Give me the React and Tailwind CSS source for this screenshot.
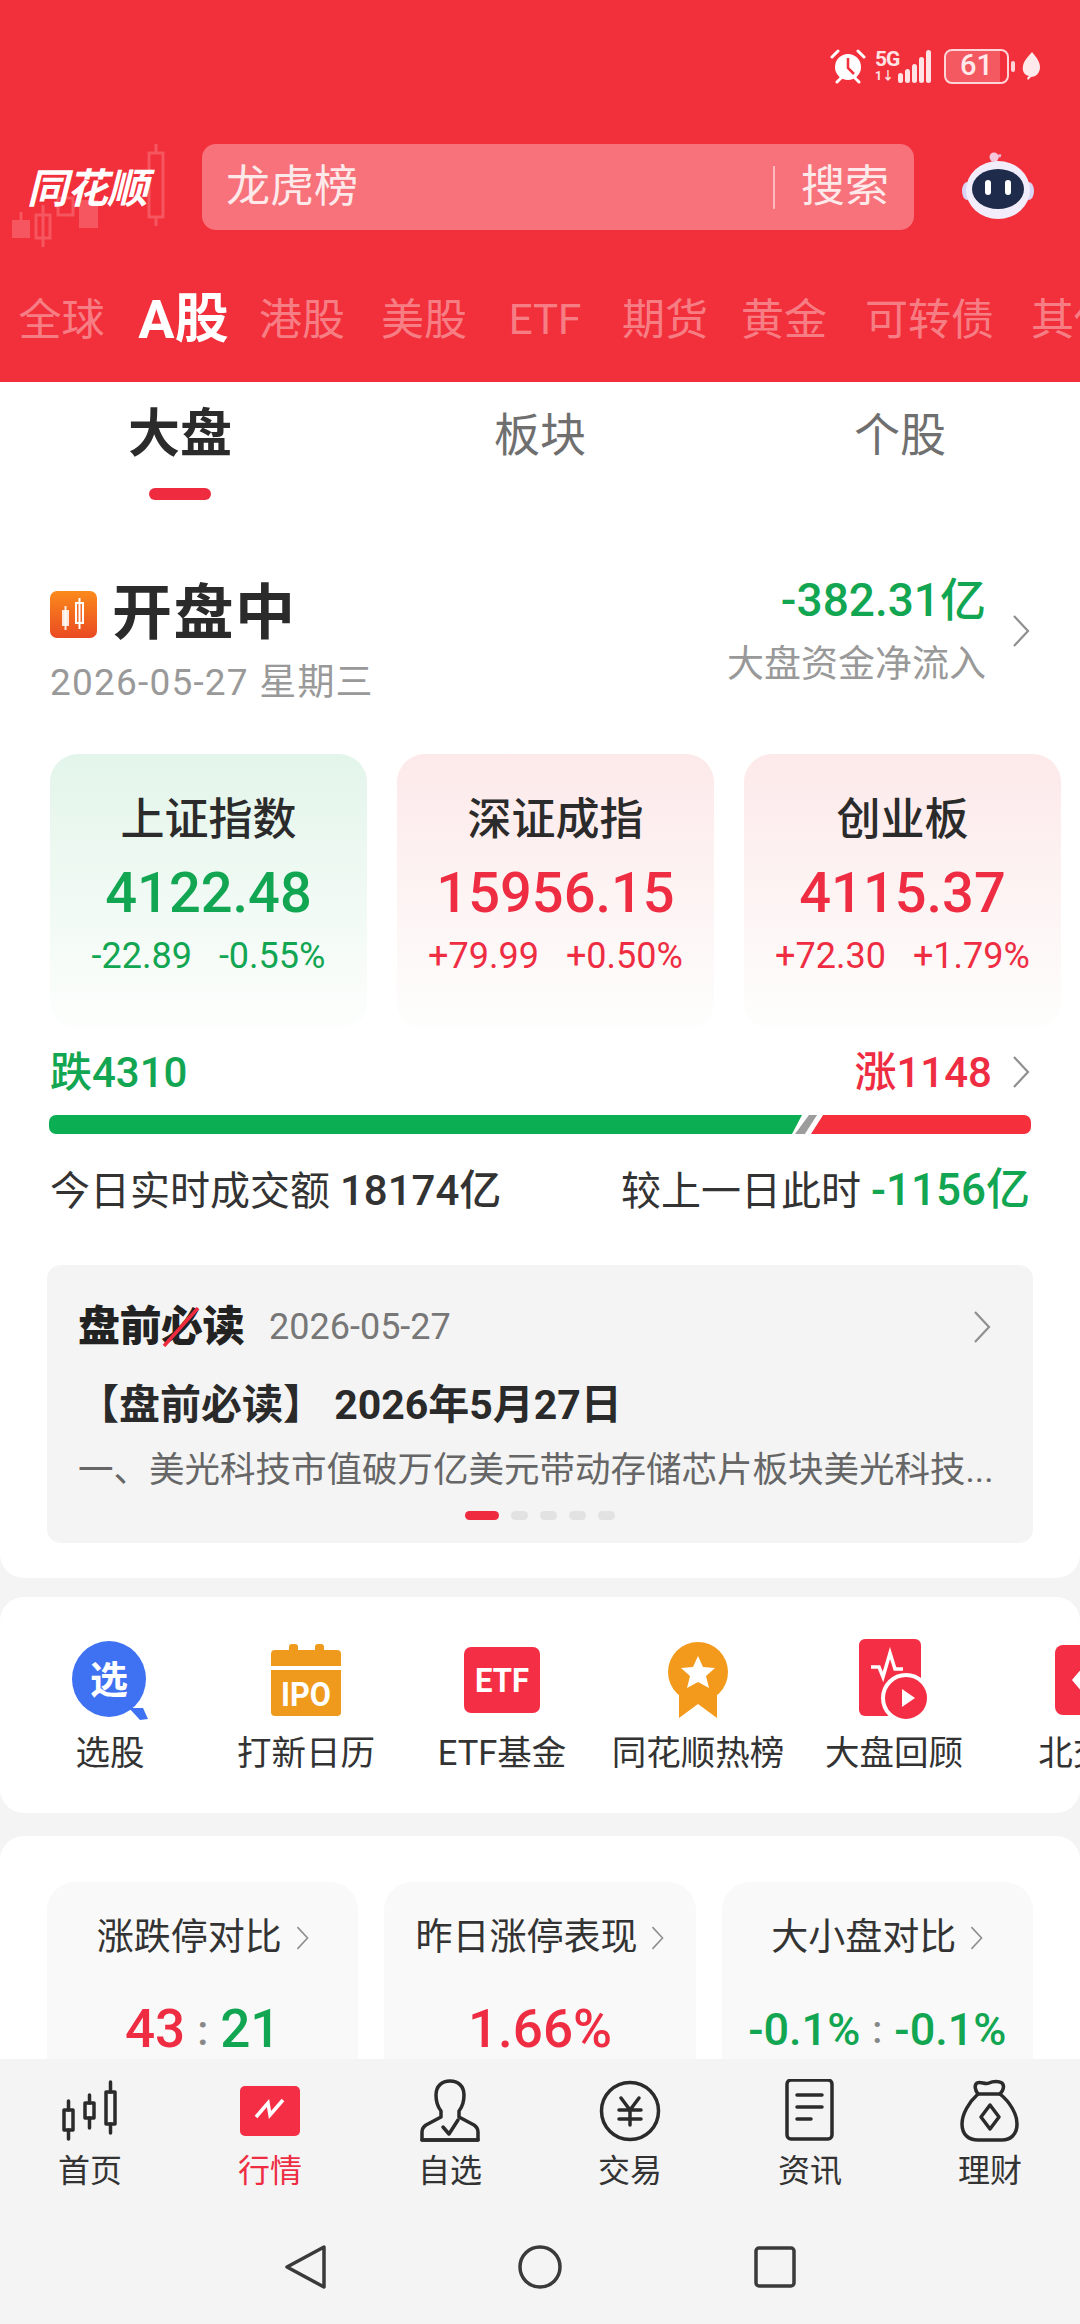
import React from "react";

const green = "text-[#12a652]";
const red = "text-[#ee2d43]";

function Chevron({ className = "", w = 18, h = 32 }) {
  return (
    <svg className={className} width={w} height={h} viewBox="0 0 18 32" fill="none" stroke="#8f8f8f" strokeWidth="2.2">
      <path d="M2 1l14 15L2 31" />
    </svg>
  );
}

function StatusIcons() {
  return (
    <div className="flex h-[40px] items-center">
      <svg width="36" height="36" viewBox="0 0 36 36" className="mr-[9px]">
        <circle cx="18" cy="19" r="13" fill="#fff" />
        <path d="M18 10v10l6 6" stroke="#f2303b" strokeWidth="2.5" fill="none" />
        <path d="M2 9l6-6M34 9l-6-6M7 34l4-4M29 34l-4-4" stroke="#fff" strokeWidth="3" strokeLinecap="round" />
      </svg>
      <div className="mr-[-3px] flex w-[26px] flex-col items-start text-[#ffe3e5]">
        <span className="text-[21px] leading-[21px] font-bold tracking-[-1px]">5G</span>
        <span className="text-[12px] leading-[13px] font-bold">1↓</span>
      </div>
      <div className="mr-[13px] flex h-[34px] items-end gap-[2px]">
        <div className="h-[10px] w-[5px] rounded-full bg-[#ffe3e5]" />
        <div className="h-[14px] w-[5px] rounded-full bg-[#ffe3e5]" />
        <div className="h-[19px] w-[5px] rounded-full bg-[#ffe3e5]" />
        <div className="h-[26px] w-[5px] rounded-full bg-[#ffe3e5]" />
        <div className="h-[33px] w-[5px] rounded-full bg-[#ffe3e5]" />
      </div>
      <div className="relative flex h-[35px] w-[65px] items-center justify-center overflow-hidden rounded-[8px] border-2 border-[#ffd5d8] text-[29px] font-medium text-[#ffe9ea]">
        <div className="absolute inset-y-0 left-0 w-[54px] bg-white/20" />
        <span className="relative">61</span>
      </div>
      <div className="mx-[2px] h-[11px] w-[4px] rounded-full bg-[#ffd5d8]" />
      <svg width="20" height="28" viewBox="0 0 20 28" className="ml-[4px]">
        <path d="M11 0c5 6 8 10 8 15 0 6-4 10-9 10l-3 3-1-2 2-2C3 23 1 19 2 14 3 8 8 4 11 0z" fill="#ffe9ea" />
      </svg>
    </div>
  );
}

function Logo() {
  return (
    <div className="relative h-[86px] w-[202px] shrink-0">
      <svg className="absolute top-0 left-0" width="202" height="110" viewBox="0 0 202 110" fill="none">
        <g fill="#f8676f" opacity="0.7">
          <rect x="12" y="76" width="18" height="18" />
          <rect x="79" y="56" width="19" height="28" />
        </g>
        <g stroke="#f8676f" strokeWidth="3" opacity="0.7">
          <rect x="36" y="71" width="14" height="23" />
          <path d="M43 61v42M21 68v8" />
          <rect x="58" y="54" width="15" height="17" />
          <rect x="149" y="9" width="14" height="64" />
          <path d="M156 0v9M156 73v9" />
        </g>
      </svg>
      <span className="absolute top-[20px] left-[27px] text-[41px] leading-[50px] font-bold tracking-[-1px] whitespace-nowrap text-white italic">
        同花顺
      </span>
    </div>
  );
}

function Robot() {
  return (
    <svg width="74" height="70" viewBox="0 0 74 70">
      <path d="M35 11c-1-5 2-8 5-7" stroke="#e9b5cf" strokeWidth="3" fill="none" />
      <circle cx="33" cy="5" r="4.5" fill="#f5c6dc" />
      <ellipse cx="6" cy="39" rx="5" ry="9" fill="#d9d3f4" />
      <ellipse cx="68" cy="39" rx="5" ry="9" fill="#d9d3f4" />
      <ellipse cx="37" cy="38" rx="32" ry="29" fill="#f1edfb" />
      <ellipse cx="37" cy="37" rx="26" ry="20" fill="#1f2b4a" />
      <rect x="24" y="28" width="6" height="15" rx="3" fill="#fff" />
      <rect x="44" y="28" width="6" height="15" rx="3" fill="#fff" />
    </svg>
  );
}

const marketTabs = [
  { label: "全球", cls: "w-[87px] text-[43px] text-white/40" },
  { label: "A股", cls: "ml-[32px] w-[93px] text-[54px] font-bold text-white" },
  { label: "港股", cls: "ml-[29px] w-[86px] text-[43px] text-white/40" },
  { label: "美股", cls: "ml-[36px] w-[86px] text-[43px] text-white/40" },
  { label: "ETF", cls: "ml-[41px] w-[74px] text-[42px] text-white/40" },
  { label: "期货", cls: "ml-[40px] w-[86px] text-[43px] text-white/40" },
  { label: "黄金", cls: "ml-[33px] w-[86px] text-[43px] text-white/40" },
  { label: "可转债", cls: "ml-[38px] w-[128px] text-[43px] text-white/40" },
  { label: "其他", cls: "ml-[38px] w-[86px] text-[43px] text-white/40" },
];

function Header() {
  return (
    <header className="flex h-[382px] shrink-0 flex-col bg-[#f2303b]">
      <div className="flex h-[144px] justify-end pt-[46px] pr-[39px]">
        <StatusIcons />
      </div>
      <div className="flex h-[86px] items-center">
        <Logo />
        <div className="flex h-[86px] w-[712px] items-center rounded-[14px] bg-[#f7727a] pl-[24px] text-[44px] text-[#fde9ea]">
          <span>龙虎榜</span>
          <div className="ml-auto h-[43px] w-[2px] bg-[#fbb9bd]" />
          <span className="mr-[25px] ml-[26px]">搜索</span>
        </div>
        <div className="ml-[47px]">
          <Robot />
        </div>
      </div>
      <div className="mt-[56px] flex h-[68px] items-center overflow-hidden pl-[18px] whitespace-nowrap">
        {marketTabs.map((t) => (
          <span key={t.label} className={`shrink-0 text-center leading-[68px] ${t.cls}`}>
            {t.label}
          </span>
        ))}
      </div>
    </header>
  );
}

function IndexCard({ title, value, a, b, up }) {
  const color = up ? red : green;
  const bg = up ? "from-[#fde9ea]" : "from-[#e3f5ea]";
  return (
    <div className={`flex h-[276px] flex-col items-center rounded-[28px] bg-gradient-to-b to-[#fdfefd] ${bg}`}>
      <div className="mt-[40px] h-[52px] text-[44px] leading-[52px] font-medium text-[#2b2b2b]">{title}</div>
      <div className={`mt-[17px] h-[60px] text-[56px] leading-[60px] font-medium ${color}`}>{value}</div>
      <div className={`mt-[13px] flex h-[40px] gap-[27px] text-[36px] leading-[40px] ${color}`}>
        <span>{a}</span>
        <span>{b}</span>
      </div>
    </div>
  );
}

function MarketCard() {
  return (
    <section className="h-[1196px] shrink-0 rounded-b-[24px] bg-white">
      <div className="grid h-[118px] grid-cols-3">
        <div className="flex flex-col items-center">
          <div className="h-[106px] text-[52px] leading-[106px] font-bold text-[#2b2b2b]">大盘</div>
          <div className="h-[12px] w-[62px] rounded-full bg-[#ee2b3f]" />
        </div>
        <div className="text-center text-[46px] leading-[106px] text-[#6f6f6f]">板块</div>
        <div className="text-center text-[46px] leading-[106px] text-[#6f6f6f]">个股</div>
      </div>

      <div className="flex h-[254px] justify-between pt-[74px] pr-[50px] pl-[50px]">
        <div>
          <div className="flex h-[80px] items-center">
            <svg width="47" height="47" viewBox="0 0 47 47">
              <defs>
                <linearGradient id="openGrad" x1="0" y1="0" x2="0" y2="1">
                  <stop offset="0" stopColor="#fb8a1c" />
                  <stop offset="1" stopColor="#ea4a22" />
                </linearGradient>
              </defs>
              <rect width="47" height="47" rx="7" fill="url(#openGrad)" />
              <rect x="12" y="19" width="7" height="16" fill="#fff" opacity="0.85" />
              <path d="M15.500 15v24" stroke="#fff" strokeWidth="2" opacity="0.85" />
              <rect x="26" y="12" width="7" height="20" fill="#f26a2a" stroke="#fff" strokeWidth="2" />
              <path d="M29.500 7v31" stroke="#fff" strokeWidth="2" />
            </svg>
            <span className="ml-[15px] text-[60px] font-bold tracking-[1.500px] text-[#2b2b2b]">开盘中</span>
          </div>
          <div className="h-[58px] text-[37px] leading-[58px] tracking-[1.200px] text-[#999999]">2026-05-27 星期三</div>
        </div>
        <div className="-mt-[2px] flex">
          <div className="flex flex-col items-end">
            <div className={`h-[56px] text-[46px] leading-[56px] font-medium ${green}`}>-382.31亿</div>
            <div className="mt-[12px] h-[50px] text-[37px] leading-[50px] text-[#999999]">大盘资金净流入</div>
          </div>
          <Chevron className="mt-[43px] ml-[26px]" />
        </div>
      </div>

      <div className="grid grid-cols-3 gap-[30px] pr-[19px] pl-[50px]">
        <IndexCard title="上证指数" value="4122.48" a="-22.89" b="-0.55%" />
        <IndexCard title="深证成指" value="15956.15" a="+79.99" b="+0.50%" up />
        <IndexCard title="创业板" value="4115.37" a="+72.30" b="+1.79%" up />
      </div>

      <div className="mt-[21px] flex h-[42px] items-center justify-between pr-[50px] pl-[50px] text-[42px] font-medium">
        <span className={green}>跌4310</span>
        <div className="flex items-center">
          <span className={red}>涨1148</span>
          <Chevron className="ml-[20px]" />
        </div>
      </div>

      <div className="mx-[49px] mt-[22px] flex h-[19px]">
        <div className="w-[753px] rounded-l-[7px] bg-[#0cae54] [clip-path:polygon(0_0,100%_0,98.670%_100%,0_100%)]" />
        <div className="-ml-[7px] w-[22px] bg-[#9c9c9c] [clip-path:polygon(63.600%_0,100%_0,45%_100%,0_100%)]" />
        <div className="-ml-[6px] flex-1 rounded-r-[7px] bg-[#f5303c] [clip-path:polygon(5.500%_0,100%_0,100%_100%,0_100%)]" />
      </div>

      <div className="mt-[36px] flex h-[40px] items-center justify-between pr-[50px] pl-[50px] text-[40px] text-[#333333]">
        <span>
          今日实时成交额 <span className="text-[42px] font-medium">18174亿</span>
        </span>
        <span>
          较上一日此时 <span className={`text-[44px] font-medium ${green}`}>-1156亿</span>
        </span>
      </div>

      <div className="mx-[47px] mt-[55px] h-[278px] rounded-[14px] bg-[#f4f4f4] px-[31px]">
        <div className="flex h-[88px] items-end">
          <div className="relative h-[52px] text-[42px] leading-[52px] font-black tracking-[-0.500px] text-[#222222]">
            盘前必读
            <svg className="absolute top-[6px] left-[84px]" width="38" height="40" viewBox="0 0 38 40">
              <path d="M2 39L36 1" stroke="#ee2b3f" strokeWidth="3.500" />
            </svg>
          </div>
          <span className="mb-[3px] ml-[25px] text-[36px] leading-[46px] text-[#777777]">2026-05-27</span>
          <Chevron className="mr-[11px] mb-[10px] ml-auto" />
        </div>
        <div className="mt-[27px] h-[50px] text-[41px] leading-[50px] font-bold whitespace-nowrap text-[#2a2a2a]">
          【盘前必读】 2026年5月27日
        </div>
        <div className="mt-[18px] h-[44px] truncate text-[35.500px] leading-[44px] text-[#666666]">
          一、美光科技市值破万亿美元带动存储芯片板块美光科技...
        </div>
        <div className="mt-[19px] flex h-[9px] justify-center gap-[12px] pr-[1px]">
          <div className="h-[9px] w-[34px] rounded-full bg-[#ee2b3f]" />
          <div className="h-[9px] w-[17px] rounded-full bg-[#e2e2e2]" />
          <div className="h-[9px] w-[17px] rounded-full bg-[#e2e2e2]" />
          <div className="h-[9px] w-[17px] rounded-full bg-[#e2e2e2]" />
          <div className="h-[9px] w-[17px] rounded-full bg-[#e2e2e2]" />
        </div>
      </div>
    </section>
  );
}

const iconFont = "Roboto, 'Noto Sans CJK SC', sans-serif";

function PickIcon() {
  return (
    <svg width="78" height="80" viewBox="0 0 78 80">
      <ellipse cx="38" cy="39" rx="37" ry="38" fill="#3f72f2" />
      <path d="M58 68l14 0 5 11-8 1z" fill="#3f72f2" />
      <text x="38" y="53" textAnchor="middle" fontSize="38" fontWeight="700" fill="#fff" fontFamily={iconFont}>选</text>
    </svg>
  );
}

function IpoIcon() {
  return (
    <svg width="70" height="72" viewBox="0 0 70 72">
      <rect x="18" y="0" width="9" height="12" rx="3" fill="#f09a1d" />
      <rect x="44" y="0" width="9" height="12" rx="3" fill="#f09a1d" />
      <path d="M0 10q0-4 4-4h62q4 0 4 4v12H0z" fill="#f09a1d" />
      <path d="M0 26h70v42q0 4-4 4H4q-4 0-4-4z" fill="#f09a1d" />
      <text x="35" y="62" textAnchor="middle" fontSize="34" fontWeight="700" fill="#fff" fontFamily={iconFont} textLength="50" lengthAdjust="spacingAndGlyphs">IPO</text>
    </svg>
  );
}

function EtfIcon() {
  return (
    <svg width="76" height="66" viewBox="0 0 76 66">
      <rect width="76" height="66" rx="7" fill="#f42f45" />
      <text x="38" y="45" textAnchor="middle" fontSize="34" fontWeight="700" fill="#fff" fontFamily={iconFont} textLength="54" lengthAdjust="spacingAndGlyphs">ETF</text>
    </svg>
  );
}

function MedalIcon() {
  return (
    <svg width="62" height="76" viewBox="0 0 62 76">
      <path d="M12 48h38v28L31 62 12 76z" fill="#f39a1d" />
      <circle cx="31" cy="30" r="30" fill="#f39a1d" />
      <path d="M31 14l5 11 12 1-9 8 3 12-11-6-11 6 3-12-9-8 12-1z" fill="#fff" />
    </svg>
  );
}

function ReviewIcon() {
  return (
    <svg width="70" height="82" viewBox="0 0 70 82">
      <rect width="62" height="77" rx="6" fill="#f42f45" />
      <path d="M12 28h8l4 10 7-24 5 16h8" fill="none" stroke="#fff" strokeWidth="3.500" />
      <circle cx="47" cy="59" r="23" fill="#f42f45" stroke="#fff" strokeWidth="4" />
      <path d="M43 50l13 9-13 9z" fill="#fff" />
    </svg>
  );
}

function BeiIcon() {
  return (
    <svg width="70" height="70" viewBox="0 0 70 70">
      <rect width="70" height="70" rx="8" fill="#f42f45" />
      <path d="M28 22l11 13-11 13-11-13z" fill="#fff" />
    </svg>
  );
}

const shortcuts = [
  { label: "选股", icon: <PickIcon /> },
  { label: "打新日历", icon: <IpoIcon /> },
  { label: "ETF基金", icon: <EtfIcon /> },
  { label: "同花顺热榜", icon: <MedalIcon /> },
  { label: "大盘回顾", icon: <ReviewIcon /> },
  { label: "北交所", icon: <BeiIcon /> },
];

function Shortcuts() {
  return (
    <section className="mt-[19px] h-[216px] shrink-0 overflow-hidden rounded-[24px] bg-white pt-[40px]">
      <div className="flex pl-[12px]">
        {shortcuts.map((s) => (
          <div key={s.label} className="flex w-[196px] shrink-0 flex-col items-center">
            <div className="flex h-[86px] items-center justify-center">{s.icon}</div>
            <div className="mt-[8px] h-[44px] text-[34.500px] leading-[44px] whitespace-nowrap text-[#333333]">{s.label}</div>
          </div>
        ))}
      </div>
    </section>
  );
}

function Tile({ title, children }) {
  return (
    <div className="h-[300px] rounded-[28px] bg-[#f9f9f9] pt-[36px]">
      <div className="flex h-[40px] items-center justify-center text-[37px] leading-[40px] whitespace-nowrap text-[#333333]">
        {title}
        <Chevron className="ml-[14px]" w={13} h={24} />
      </div>
      <div className="mt-[42px] flex h-[60px] items-center justify-center whitespace-nowrap">{children}</div>
    </div>
  );
}

function Compare() {
  return (
    <section className="mt-[23px] shrink-0 rounded-t-[24px] bg-white pt-[46px]">
      <div className="grid grid-cols-3 gap-[26px] px-[47px]">
        <Tile title="涨跌停对比">
          <span className={`text-[53px] font-medium ${red}`}>43</span>
          <span className="mx-[12px] text-[42px] font-medium text-[#888888]">:</span>
          <span className={`text-[53px] font-medium ${green}`}>21</span>
        </Tile>
        <Tile title="昨日涨停表现">
          <span className={`text-[53px] font-medium ${red}`}>1.66%</span>
        </Tile>
        <Tile title="大小盘对比">
          <span className={`text-[45px] font-medium ${green}`}>-0.1%</span>
          <span className="mx-[12px] text-[38px] font-medium text-[#888888]">:</span>
          <span className={`text-[45px] font-medium ${green}`}>-0.1%</span>
        </Tile>
      </div>
    </section>
  );
}

const ink = { fill: "none", stroke: "#2b2b2b", strokeWidth: 3.5, strokeLinejoin: "round", strokeLinecap: "round" };

const navItems = [
  {
    label: "首页",
    icon: (
      <svg width="64" height="64" viewBox="0 0 64 64" {...ink}>
        <rect x="6" y="31" width="9" height="20" />
        <path d="M10.500 22v9M10.500 51v9" />
        <rect x="27" y="24" width="9" height="15" />
        <path d="M31.500 16v8M31.500 39v10" />
        <rect x="48" y="13" width="9" height="32" />
        <path d="M52.500 3v10M52.500 45v9" />
      </svg>
    ),
  },
  {
    label: "行情",
    active: true,
    icon: (
      <svg width="64" height="64" viewBox="0 0 64 64">
        <rect x="2" y="7" width="60" height="50" rx="5" fill="#f42f45" />
        <path d="M18 38l12-14 2 12 13-15" fill="none" stroke="#fff" strokeWidth="3.500" />
      </svg>
    ),
  },
  {
    label: "自选",
    icon: (
      <svg width="64" height="64" viewBox="0 0 64 64" {...ink}>
        <path d="M23 32c-4-5-5-11-5-16 0-9 6-14 14-14s14 5 14 14c0 5-1 11-5 16v6l15 8c3 2 4 4 4 7v8H4v-8c0-3 1-5 4-7l15-8z" />
        <path d="M25 48l6 7 9-14" />
        <path d="M4 61h56" />
      </svg>
    ),
  },
  {
    label: "交易",
    icon: (
      <svg width="64" height="64" viewBox="0 0 64 64" {...ink}>
        <circle cx="32" cy="32" r="28.500" />
        <path d="M23 19l9 12 9-12M21 31h22M21 40h22M32 31v15" />
      </svg>
    ),
  },
  {
    label: "资讯",
    icon: (
      <svg width="64" height="64" viewBox="0 0 64 64" {...ink}>
        <rect x="9" y="1" width="45" height="59" rx="4" />
        <path d="M19 16h25M19 28h25M19 40h14" />
      </svg>
    ),
  },
  {
    label: "理财",
    icon: (
      <svg width="64" height="64" viewBox="0 0 64 64" {...ink}>
        <path d="M20 15c-3-4-4-9-1-11 4-2 8 2 12 0 4-2 10-2 13 0 3 3 1 8-2 11" />
        <path d="M20 15h22c10 8 17 20 17 30 0 11-7 16-15 16H20C11 61 4 56 4 45c0-10 7-22 16-30z" />
        <path d="M32 26l9 12-9 12-9-12z" />
      </svg>
    ),
  },
];

function BottomNav() {
  return (
    <nav className="h-[265px] shrink-0 bg-[#f4f4f4] pt-[20px]">
      <div className="grid grid-cols-6">
        {navItems.map((n) => (
          <div key={n.label} className="flex flex-col items-center">
            <div className="h-[64px]">{n.icon}</div>
            <div className={`mt-[8px] h-[40px] text-[32px] leading-[40px] ${n.active ? red : "text-[#333333]"}`}>{n.label}</div>
          </div>
        ))}
      </div>
      <div className="mt-[54px] flex justify-center gap-[191px]">
        <svg width="44" height="44" viewBox="0 0 44 44" fill="none" stroke="#3a3a3a" strokeWidth="3.500" strokeLinejoin="round">
          <path d="M41 2L4 22l37 20z" />
        </svg>
        <svg width="44" height="44" viewBox="0 0 44 44" fill="none" stroke="#3a3a3a" strokeWidth="3.500">
          <circle cx="22" cy="22" r="20" />
        </svg>
        <svg width="44" height="44" viewBox="0 0 44 44" fill="none" stroke="#3a3a3a" strokeWidth="3.500">
          <rect x="3" y="3" width="38" height="38" rx="3" />
        </svg>
      </div>
    </nav>
  );
}

export default function App() {
  return (
    <div className="flex h-[2324px] w-[1080px] flex-col overflow-hidden bg-[#f4f4f4] [font-family:Roboto,'Noto_Sans_CJK_SC',sans-serif]">
      <Header />
      <main className="flex min-h-0 flex-1 flex-col overflow-hidden">
        <MarketCard />
        <Shortcuts />
        <Compare />
      </main>
      <BottomNav />
    </div>
  );
}
